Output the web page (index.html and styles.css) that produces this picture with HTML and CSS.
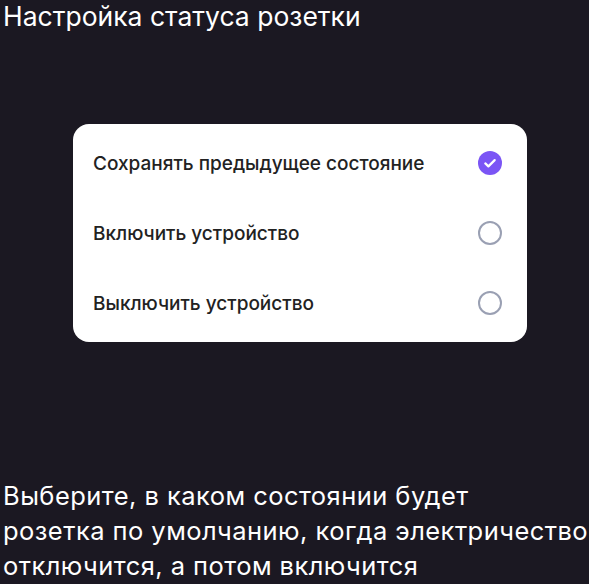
FILE: index.html
```html
<!DOCTYPE html>
<html lang="ru">
<head>
<meta charset="utf-8">
<link rel="stylesheet" href="styles.css">
</head>
<body>
<div class="page">
  <h1 class="title">Настройка статуса розетки</h1>
  <div class="card">
    <div class="row">
      <span class="label">Сохранять предыдущее состояние</span>
      <span class="radio checked">
        <svg width="24" height="24" viewBox="0 0 24 24"><circle cx="12" cy="12" r="12" fill="#7b55f5"/><path d="M7.3 12.4l3.1 3 6.3-6.3" fill="none" stroke="#fff" stroke-width="2.2" stroke-linecap="round" stroke-linejoin="round"/></svg>
      </span>
    </div>
    <div class="row">
      <span class="label">Включить устройство</span>
      <span class="radio"></span>
    </div>
    <div class="row">
      <span class="label">Выключить устройство</span>
      <span class="radio"></span>
    </div>
  </div>
  <p class="hint">Выберите, в каком состоянии будет<br>розетка по умолчанию, когда электричество<br>отключится, а потом включится</p>
</div>
</body>
</html>
```
FILE: styles.css
```css
html, body {
  margin: 0;
  padding: 0;
  background: #1b1822;
  height: 100%;
  overflow: hidden;
}
.page {
  padding: 0 0 0 3px;
  font-family: Inter, "Noto Sans", sans-serif;
  color: #ffffff;
}
.title {
  margin: 0;
  font-size: 26.5px;
  font-weight: 400;
  line-height: 33px;
  letter-spacing: 0;
}
.card {
  margin: 91px 0 0 70px;
  width: 454px;
  height: 218px;
  box-sizing: border-box;
  padding: 4px 0;
  background: #ffffff;
  border-radius: 16px;
  color: #222222;
}
.row {
  height: 70px;
  display: flex;
  align-items: center;
  justify-content: space-between;
  padding: 0 25px 0 20px;
}
.label {
  font-size: 19px;
  font-weight: 500;
  letter-spacing: 0;
}
.radio {
  width: 24px;
  height: 24px;
  box-sizing: border-box;
  border: 2px solid #9aa0b3;
  border-radius: 50%;
  display: block;
}
.radio.checked {
  border: none;
}
.radio svg {
  display: block;
}
.hint {
  margin: 136px 0 0 0;
  font-size: 25.5px;
  line-height: 35px;
  font-weight: 400;
  white-space: nowrap;
  letter-spacing: 0.45px;
}
```
